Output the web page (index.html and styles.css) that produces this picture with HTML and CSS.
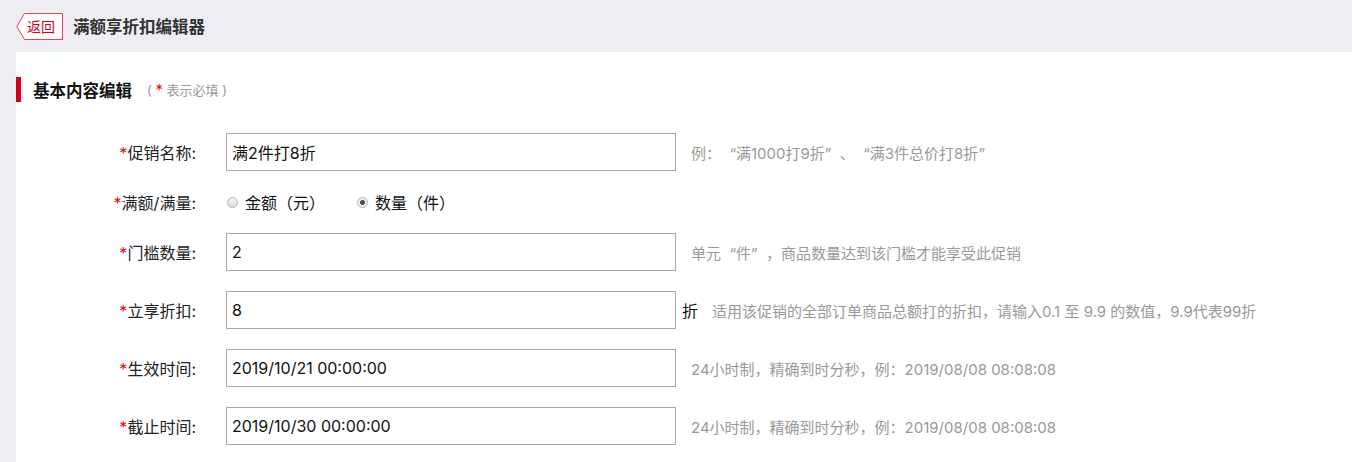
FILE: index.html
```html
<!DOCTYPE html>
<html lang="zh-CN">
<head>
    <meta charset="UTF-8">
    <title>满额享折扣编辑器</title>
    <link rel="stylesheet" href="styles.css">
</head>
<body>

<div class="topbar">
    <a class="back" href="#">
        <svg class="back-shape" width="47" height="27" viewBox="0 0 47 27">
            <polygon points="8.5,0.5 46.5,0.5 46.5,26.5 8.5,26.5 0.8,13.5" fill="#fff" stroke="#e0464f" stroke-width="1"/>
        </svg>
        <span class="back-text">返回</span>
    </a>
    <div class="page-title">满额享折扣编辑器</div>
</div>

<div class="panel">
    <div class="section-head">
        <span class="section-bar"></span>
        <span class="section-title">基本内容编辑</span>
        <span class="section-note">( <i>*</i> 表示必填 )</span>
    </div>

    <div class="form">
        <div class="row">
            <label class="label"><i>*</i>促销名称:</label>
            <input class="field" type="text" value="满2件打8折">
            <span class="hint">例：<span class="q-open">“</span>满1000打9折<span class="q-close">”</span>、<span class="q-open">“</span>满3件总价打8折<span class="q-close">”</span></span>
        </div>
        <div class="row row-radio">
            <label class="label"><i>*</i>满额/满量:</label>
            <div class="radios">
                <label class="radio"><input type="radio" name="mode">金额（元）</label>
                <label class="radio"><input type="radio" name="mode" checked>数量（件）</label>
            </div>
        </div>
        <div class="row">
            <label class="label"><i>*</i>门槛数量:</label>
            <input class="field" type="text" value="2">
            <span class="hint">单元<span class="q-open">“</span>件<span class="q-close">”</span>，商品数量达到该门槛才能享受此促销</span>
        </div>
        <div class="row">
            <label class="label"><i>*</i>立享折扣:</label>
            <input class="field" type="text" value="8">
            <span class="unit">折</span>
            <span class="hint hint-unit">适用该促销的全部订单商品总额打的折扣，请输入0.1 至 9.9 的数值，9.9代表99折</span>
        </div>
        <div class="row">
            <label class="label"><i>*</i>生效时间:</label>
            <input class="field" type="text" value="2019/10/21 00:00:00">
            <span class="hint">24小时制，精确到时分秒，例：2019/08/08 08:08:08</span>
        </div>
        <div class="row">
            <label class="label"><i>*</i>截止时间:</label>
            <input class="field" type="text" value="2019/10/30 00:00:00">
            <span class="hint">24小时制，精确到时分秒，例：2019/08/08 08:08:08</span>
        </div>
    </div>
</div>

</body>
</html>
```

FILE: styles.css
```css
body {
    font-family: Inter, "Noto Sans CJK SC", sans-serif;
    margin: 0;
    padding: 0;
    background-color: #eeedf3;
    color: #222;
}

i {
    font-style: normal;
    color: #f00;
}

.topbar {
    display: flex;
    align-items: center;
    height: 52px;
    padding-left: 16px;
}

.back {
    position: relative;
    display: flex;
    align-items: center;
    width: 47px;
    height: 27px;
    text-decoration: none;
}

.back-shape {
    position: absolute;
    left: 0;
    top: 0;
}

.back-text {
    position: relative;
    margin-left: 11px;
    font-size: 14px;
    line-height: 27px;
    color: #d0021b;
}

.page-title {
    margin-left: 10px;
    font-size: 16.5px;
    font-weight: bold;
    color: #333;
}

.panel {
    margin-left: 16px;
    background-color: #fff;
    padding: 25px 0 17px;
}

.section-head {
    display: flex;
    align-items: center;
    height: 25px;
}

.section-bar {
    width: 5px;
    height: 25px;
    background-color: #d0021b;
}

.section-title {
    margin-left: 12px;
    font-size: 16.5px;
    font-weight: bold;
    color: #111;
}

.section-note {
    margin-left: 15px;
    font-size: 13px;
    color: #999;
    white-space: pre;
}

.section-note i {
    font-size: 15px;
}

.form {
    display: flex;
    flex-direction: column;
    gap: 20px;
    margin-top: 31px;
}

.row {
    display: flex;
    align-items: center;
    height: 38px;
}

.row-radio {
    height: 22px;
}

.label {
    width: 180px;
    text-align: right;
    font-size: 16px;
    color: #222;
}

.field {
    box-sizing: border-box;
    width: 450px;
    height: 38px;
    margin: 0 0 0 30px;
    padding: 0 5px;
    border: 1px solid #a9a9a9;
    border-radius: 0;
    font-family: inherit;
    font-size: 16px;
    color: #111;
    outline: none;
}

.hint {
    margin-left: 15px;
    font-size: 15px;
    color: #999;
}

.q-open,
.q-close {
    display: inline-block;
    width: 1em;
}

.q-open {
    text-align: right;
}

.unit {
    margin-left: 6px;
    font-size: 16px;
    color: #111;
}

.hint-unit {
    margin-left: 14px;
}

.radios {
    display: flex;
    align-items: center;
    margin-left: 30px;
}

.radio {
    display: flex;
    align-items: center;
    margin-right: 31px;
    font-size: 16px;
    color: #111;
}

.radio input {
    appearance: none;
    -webkit-appearance: none;
    width: 11px;
    height: 11px;
    margin: 0 7px 0 1px;
    border: 1px solid #b5b5b5;
    border-radius: 50%;
    background: linear-gradient(#f4f4f4, #dcdcdc);
    box-sizing: border-box;
}

.radio input:checked {
    background: radial-gradient(circle, #555 0, #555 2.2px, #eee 2.8px);
}
```
